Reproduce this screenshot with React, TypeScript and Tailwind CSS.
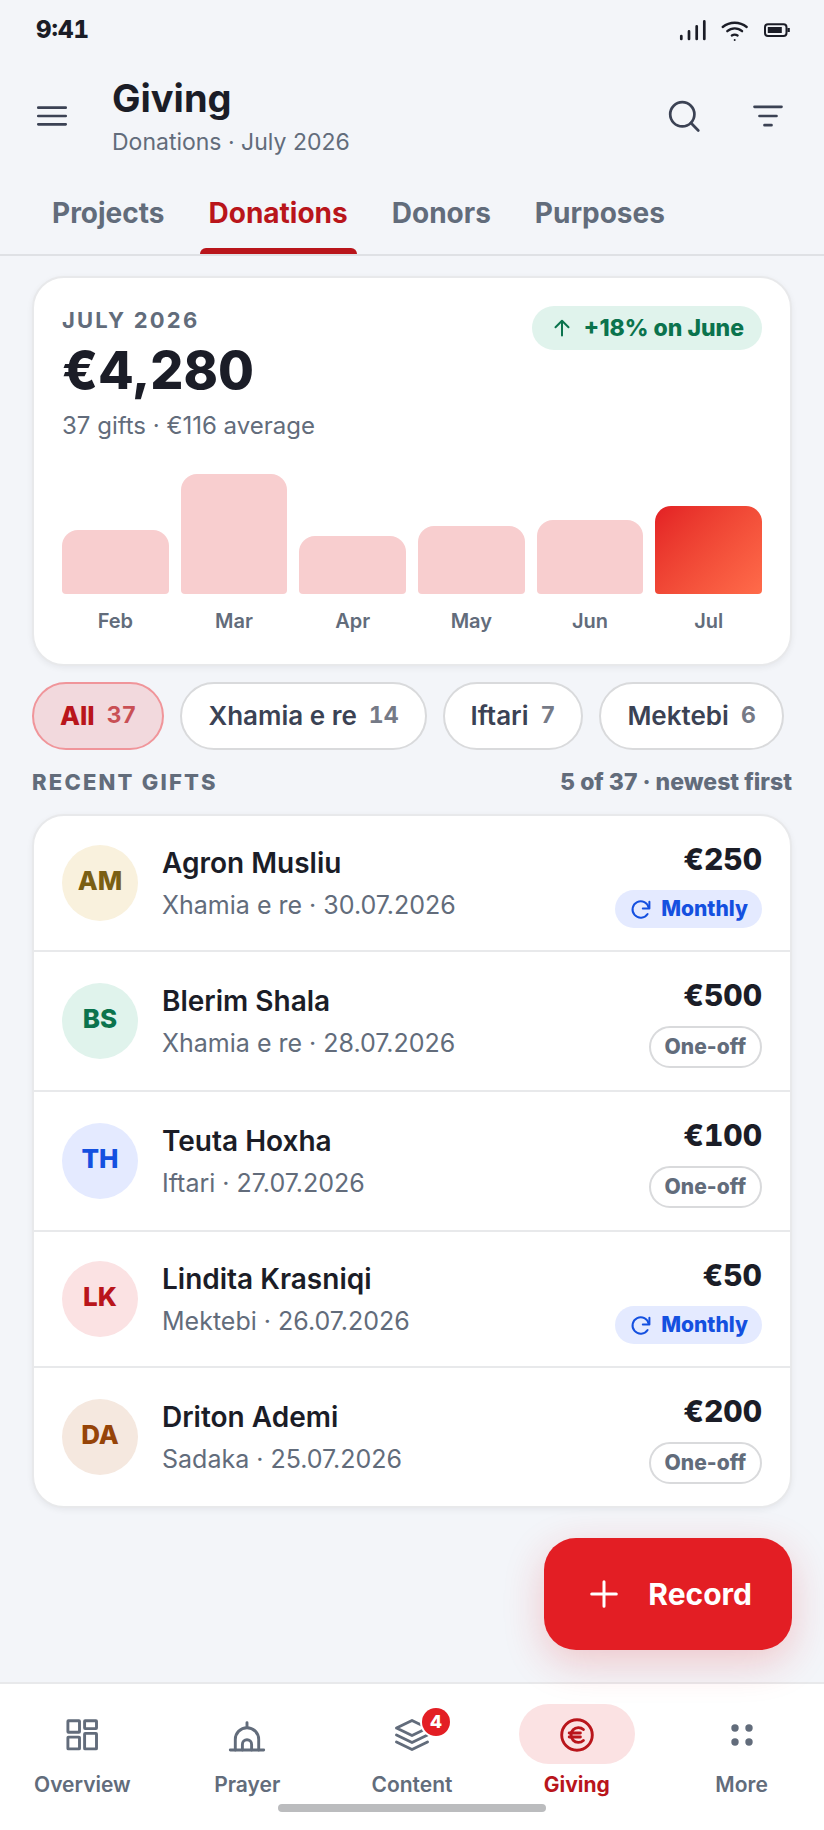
import React from "react";
import clsx from "clsx";

const tabs = ["Projects", "Donations", "Donors", "Purposes"];

const months = [
  { label: "Feb", height: 64 },
  { label: "Mar", height: 120 },
  { label: "Apr", height: 58 },
  { label: "May", height: 68 },
  { label: "Jun", height: 74 },
  { label: "Jul", height: 88, current: true },
];

const filters = [
  { label: "All", count: 37, active: true },
  { label: "Xhamia e re", count: 14 },
  { label: "Iftari", count: 7 },
  { label: "Mektebi", count: 6 },
];

const gifts = [
  { initials: "AM", name: "Agron Musliu", purpose: "Xhamia e re", date: "30.07.2026", amount: "€250", monthly: true, avatar: "bg-[#f9f1dd] text-[#7a5f14]" },
  { initials: "BS", name: "Blerim Shala", purpose: "Xhamia e re", date: "28.07.2026", amount: "€500", monthly: false, avatar: "bg-[#e0f3ec] text-[#0b734d]" },
  { initials: "TH", name: "Teuta Hoxha", purpose: "Iftari", date: "27.07.2026", amount: "€100", monthly: false, avatar: "bg-[#e4eaff] text-[#1450e0]" },
  { initials: "LK", name: "Lindita Krasniqi", purpose: "Mektebi", date: "26.07.2026", amount: "€50", monthly: true, avatar: "bg-[#fbe2e3] text-[#b9151b]" },
  { initials: "DA", name: "Driton Ademi", purpose: "Sadaka", date: "25.07.2026", amount: "€200", monthly: false, avatar: "bg-[#f5e8df] text-[#964408]" },
];

function Icon({ children, className = "size-10", box = 40, stroke = 2.7 }: any) {
  return (
    <svg
      className={className}
      viewBox={`0 0 ${box} ${box}`}
      fill="none"
      stroke="currentColor"
      strokeWidth={stroke}
      strokeLinecap="round"
      strokeLinejoin="round"
      aria-hidden="true"
    >
      {children}
    </svg>
  );
}

const navItems = [
  {
    label: "Overview",
    icon: (
      <>
        <rect x="5.9" y="6.7" width="11.6" height="11.6" rx="0.5" />
        <rect x="22.6" y="6.7" width="11.9" height="7.9" rx="0.5" />
        <rect x="5.9" y="23.1" width="11.6" height="11.8" rx="0.5" />
        <rect x="22.6" y="19.4" width="11.9" height="15.5" rx="0.5" />
      </>
    ),
  },
  {
    label: "Prayer",
    icon: (
      <>
        <path d="M3.3 36h33.4" />
        <path d="M8.3 36V25.4a11.7 11.7 0 0 1 23.4 0V36" />
        <path d="M15.4 36v-5.6a4.6 4.6 0 0 1 9.2 0V36" />
        <path d="M20 8.8v4.6" />
      </>
    ),
  },
  {
    label: "Content",
    count: 4,
    icon: (
      <>
        <path d="M20 6.5 4.5 14 20 21.5 35.5 14z" />
        <path d="M4.5 21 20 28.5 35.5 21" />
        <path d="M4.5 28 20 35.5 35.5 28" />
      </>
    ),
  },
  {
    label: "Giving",
    active: true,
    icon: (
      <>
        <circle cx="20" cy="21" r="15.3" />
        <path d="M26.4 15.5a7.4 7.4 0 1 0 0 11" />
        <path d="M12.2 19h11.2M12.2 23h11.2" />
      </>
    ),
  },
  {
    label: "More",
    icon: (
      <g fill="currentColor" stroke="none">
        <circle cx="13" cy="14" r="3.7" />
        <circle cx="27" cy="14" r="3.7" />
        <circle cx="13" cy="28" r="3.7" />
        <circle cx="27" cy="28" r="3.7" />
      </g>
    ),
  },
];

function StatusBar() {
  return (
    <div className="flex h-15 items-center justify-between pl-9 pr-8 text-[#1b1d27]">
      <span className="text-2xl font-extrabold tabular-nums">9:41</span>
      <div className="flex gap-[10px]">
        <Icon className="size-8" box={32}>
          <path d="M5.3 25v-3M13 25v-7.6M20.7 25V12.3M28.3 25V7.4" />
        </Icon>
        <Icon className="size-8" box={32} stroke={2.3}>
          <path d="M4.7 13a19 19 0 0 1 24 0M9.3 17.2a11 11 0 0 1 14.8 0M13.8 21.5a5.5 5.5 0 0 1 5.8 0" />
          <circle cx="16.7" cy="26" r="1" fill="currentColor" stroke="none" />
        </Icon>
        <Icon className="size-8" box={32} stroke={2}>
          <rect x="5" y="10.3" width="21.5" height="11.6" rx="3" />
          <path d="M7.8 13h14v6h-14zM27.4 14h2.4v4h-2.4z" fill="currentColor" stroke="none" />
        </Icon>
      </div>
    </div>
  );
}

function Header() {
  return (
    <header className="flex h-28 items-center pl-[10px] pr-[14px] text-[#3b4254]">
      <button type="button" aria-label="Menu" className="flex size-21 items-center justify-center">
        <Icon>
          <path d="M6.3 11.7h27.4M6.3 20h27.4M6.3 28.3h27.4" />
        </Icon>
      </button>
      <div className="ml-[18px] flex-1 pt-1">
        <h1 className="text-[38px]/[48px] font-bold text-[#1b1d27]">Giving</h1>
        <p className="text-[23px]/[40px] text-[#626c7b]">Donations · July 2026</p>
      </div>
      <button type="button" aria-label="Search" className="flex size-21 items-center justify-center">
        <Icon>
          <circle cx="18.3" cy="18.3" r="12.1" />
          <path d="m27 27 7.3 7.5" />
        </Icon>
      </button>
      <button type="button" aria-label="Filter" className="flex size-21 items-center justify-center">
        <Icon>
          <path d="M6.5 10.8h27M11.5 20h17M16.5 29.2h7" />
        </Icon>
      </button>
    </header>
  );
}

function Tabs() {
  return (
    <nav className="flex border-b-2 border-[#dfe1e5] px-[30px]">
      {tabs.map((tab) => {
        const active = tab === "Donations";
        return (
          <a
            key={tab}
            href="#"
            className={clsx(
              "relative px-[22px] text-[28px]/[82px] font-bold",
              active ? "text-[#b9151b]" : "text-[#626c7b]"
            )}
          >
            {tab}
            {active && <span className="absolute inset-x-[13px] bottom-0 h-[6px] rounded-t-md bg-[#b9151b]" />}
          </a>
        );
      })}
    </nav>
  );
}

function SummaryCard() {
  return (
    <section className="rounded-[32px] border-2 border-[#e8e9eb] bg-white p-7 shadow-[0_2px_6px_rgba(20,24,40,0.06)]">
      <div className="flex items-start justify-between">
        <div>
          <h2 className="text-[22px]/[28px] font-bold tracking-widest text-[#626c7b] uppercase">July 2026</h2>
          <p className="mt-1 text-[52px]/[66px] font-extrabold text-[#1b1d27]">€4,280</p>
          <p className="mt-1 text-2xl/[36px] text-[#626c7b]">37 gifts · €116 average</p>
        </div>
        <span className="flex h-11 items-center gap-[10px] rounded-full bg-[#e0f3ec] px-[18px] text-[23px] font-extrabold text-[#0b734d]">
          <Icon className="size-6" box={24} stroke={2}>
            <path d="M12 19.5V5M5.5 11.2 12 4.8l6.5 6.4" />
          </Icon>
          +18% on June
        </span>
      </div>
      <div className="mt-[30px] flex h-30 items-end gap-3">
        {months.map((m) => (
          <div
            key={m.label}
            className={clsx(
              "flex-1 rounded-t-2xl rounded-b",
              m.current ? "bg-linear-135 from-[#e31e24] to-[#ff6b4a]" : "bg-[#f8cecf]"
            )}
            style={{ height: m.height }}
          />
        ))}
      </div>
      <div className="mt-3 flex gap-3 text-center text-xl/[30px] font-semibold text-[#626c7b]">
        {months.map((m) => (
          <span key={m.label} className="flex-1">{m.label}</span>
        ))}
      </div>
    </section>
  );
}

function Filters() {
  return (
    <div className="mt-4 flex gap-4">
      {filters.map((f) => (
        <button
          key={f.label}
          type="button"
          className={clsx(
            "flex h-17 items-center gap-3 rounded-full border-2 px-[26px] pb-0.5 text-[26px] whitespace-nowrap",
            f.active
              ? "border-[#f0959a] bg-[#f2d9dd] font-extrabold text-[#b9151b]"
              : "border-[#d9dadc] bg-white font-semibold text-[#3b4254]"
          )}
        >
          {f.label}
          <span className="text-[23px] font-bold tabular-nums opacity-70">{f.count}</span>
        </button>
      ))}
    </div>
  );
}

function GiftRow({ gift }: any) {
  return (
    <li className="flex items-center border-b-2 border-[#e8e9eb] px-7 py-[22px] last:border-b-0">
      <span className={clsx("flex size-19 items-center justify-center rounded-full pb-1.5 text-[26px] font-extrabold", gift.avatar)}>
        {gift.initials}
      </span>
      <div className="ml-6 flex-1 pt-0.5">
        <p className="text-[28px]/[40px] font-semibold text-[#1b1d27]">{gift.name}</p>
        <p className="mt-0.5 text-[25px]/[40px] text-[#626c7b]">{gift.purpose} · {gift.date}</p>
      </div>
      <div className="flex flex-col items-end gap-[10px]">
        <span className="text-[30px]/[42px] font-extrabold text-[#1b1d27] tabular-nums">{gift.amount}</span>
        {gift.monthly ? (
          <span className="flex h-[38px] items-center gap-2 rounded-full bg-[#e4eaff] px-[14px] text-[21px] font-extrabold text-[#1450e0]">
            <Icon className="size-6" box={24} stroke={2}>
              <path d="M18.6 17a8.2 8.2 0 1 1 1.2-6" />
              <path d="M20.4 4.8v6.6h-6.6" />
            </Icon>
            Monthly
          </span>
        ) : (
          <span className="flex h-[42px] items-center rounded-full border-2 border-[#d9dadc] px-[14px] text-[21px] font-extrabold text-[#626c7b]">
            One-off
          </span>
        )}
      </div>
    </li>
  );
}

function BottomNav() {
  return (
    <nav className="relative flex h-37 border-t-2 border-[#e8e9eb] bg-white pt-5">
      {navItems.map((item) => (
        <a
          key={item.label}
          href="#"
          className={clsx(
            "flex flex-1 flex-col items-center text-[21px]/[42px]",
            item.active ? "font-bold text-[#b9151b]" : "font-semibold text-[#626c7b]"
          )}
        >
          <span
            className={clsx(
              "relative flex h-15 w-29 items-center justify-center rounded-full",
              item.active && "bg-[#fbe2e3]"
            )}
          >
            <Icon stroke={2.9}>{item.icon}</Icon>
            {item.count && (
              <span className="absolute top-1 right-5 flex size-7 items-center justify-center rounded-full bg-[#e31e24] text-lg font-extrabold text-white ring-2 ring-white">
                {item.count}
              </span>
            )}
          </span>
          {item.label}
        </a>
      ))}
      {/* home indicator */}
      <span className="absolute bottom-[18px] left-1/2 h-2 w-67 -translate-x-1/2 rounded-full bg-[#bbbcbe]" />
    </nav>
  );
}

export default function App() {
  return (
    <div className="flex min-h-screen flex-col bg-[#f3f5f9] font-['Inter',sans-serif]">
      <StatusBar />
      <Header />
      <Tabs />
      <main className="flex flex-1 flex-col px-8 pt-5">
        <SummaryCard />
        <Filters />
        <div className="mt-3 mb-3 flex items-baseline justify-between text-[#626c7b]">
          <h2 className="text-[22px]/[38px] font-extrabold tracking-widest uppercase">Recent gifts</h2>
          <span className="text-[23px]/[40px] font-extrabold">5 of 37 · newest first</span>
        </div>
        <ul className="rounded-[32px] border-2 border-[#e8e9eb] bg-white shadow-[0_2px_6px_rgba(20,24,40,0.06)]">
          {gifts.map((gift) => (
            <GiftRow key={gift.initials} gift={gift} />
          ))}
        </ul>
      </main>
      <button
        type="button"
        className="relative z-10 mx-8 mt-[30px] mb-8 flex h-28 items-center gap-6 self-end rounded-[32px] bg-[#e31e24] px-10 text-[30px] font-bold text-white shadow-[0_12px_40px_rgba(227,30,36,0.22)]"
      >
        <Icon stroke={3}>
          <path d="M20 7.7v24.6M7.7 20h24.6" />
        </Icon>
        Record
      </button>
      <BottomNav />
    </div>
  );
}
